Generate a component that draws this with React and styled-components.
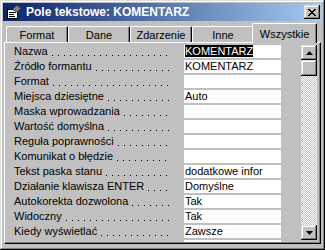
import React from "react";
import styled, { createGlobalStyle } from "styled-components";

const GlobalStyle = createGlobalStyle`
  body {
    margin: 0;
    background: #c0c0c0;
  }
  * {
    box-sizing: border-box;
  }
`;

const raised = `
  box-shadow: inset -1px -1px #000, inset 1px 1px #dfdfdf,
    inset -2px -2px #808080, inset 2px 2px #fff;
`;

const Window = styled.div`
  width: 325px;
  height: 250px;
  padding: 3px;
  background: #c0c0c0;
  ${raised}
  display: flex;
  flex-direction: column;
  font-family: "Liberation Sans", Arial, sans-serif;
  font-size: 11px;
  color: #000;
  overflow: hidden;
`;

const TitleBar = styled.div`
  height: 18px;
  flex-shrink: 0;
  display: flex;
  align-items: center;
  padding: 0 2px 0 3px;
  background: linear-gradient(to right, #0a246a, #a6caf0);
`;

const TitleText = styled.span`
  flex: 1;
  margin-left: 4px;
  color: #fff;
  font-weight: bold;
  font-size: 12px;
  white-space: nowrap;
`;

const CloseButton = styled.div`
  width: 16px;
  height: 14px;
  background: #c0c0c0;
  ${raised}
  display: flex;
  align-items: center;
  justify-content: center;
`;

const TabStrip = styled.div`
  height: 21px;
  flex-shrink: 0;
  display: flex;
  align-items: flex-end;
  padding-left: 3px;
  position: relative;
  z-index: 1;
`;

const Tab = styled.div`
  width: ${(p) => (p.$active ? 65 : 62)}px;
  height: ${(p) => (p.$active ? 20 : 16)}px;
  margin-left: ${(p) => (p.$active ? -2 : 0)}px;
  margin-bottom: ${(p) => (p.$active ? -1 : 0)}px;
  background: #c0c0c0;
  border-top: 1px solid #fff;
  border-left: 1px solid #fff;
  border-right: 1px solid #000;
  border-top-left-radius: 2px;
  border-top-right-radius: 2px;
  box-shadow: inset -1px 0 #808080;
  display: flex;
  align-items: center;
  justify-content: center;
  padding-top: 1px;
  white-space: nowrap;
`;

const Panel = styled.div`
  flex: 1;
  min-height: 0;
  margin: 0 1px 3px 1px;
  border-top: 1px solid #fff;
  border-left: 1px solid #fff;
  border-right: 1px solid #000;
  border-bottom: 1px solid #000;
  box-shadow: inset -1px -1px #808080;
  padding-top: 2px;
  display: flex;
  align-items: flex-start;
  overflow: hidden;
`;

const PropertyList = styled.div`
  width: 276px;
  height: 197px;
  display: flex;
  flex-direction: column;
  overflow: hidden;
`;

const Row = styled.div`
  height: 15px;
  flex-shrink: 0;
  display: flex;
  padding-bottom: 2px;
`;

const Label = styled.div`
  width: 179px;
  padding: 0 14px 0 9px;
  line-height: 13px;
  white-space: nowrap;
  display: flex;
`;

/* dotted leader between the property name and its value */
const Leader = styled.span`
  flex: 1;
  margin-left: 3px;
  background-image: linear-gradient(to right, #000 1px, transparent 1px);
  background-size: 6px 1px;
  background-repeat: repeat-x;
  background-position: 1px 10px;
`;

const Value = styled.div`
  width: 97px;
  background: #fff;
  line-height: 13px;
  padding-left: 1px;
  white-space: nowrap;
  overflow: hidden;
`;

const Selected = styled.span`
  background: #000;
  color: #fff;
`;

const Scrollbar = styled.div`
  width: 16px;
  height: 195px;
  margin-left: 20px;
  display: flex;
  flex-direction: column;
`;

const ScrollButton = styled.div`
  height: ${(p) => p.$size || 15}px;
  flex-shrink: 0;
  background: #c0c0c0;
  ${raised}
  display: flex;
  align-items: center;
  justify-content: center;
`;

const Track = styled.div`
  flex: 1;
  background-color: #c0c0c0;
  background-image: conic-gradient(#fff 25%, #c0c0c0 0 50%, #fff 0 75%, #c0c0c0 0);
  background-size: 2px 2px;
`;

const FormIcon = () => (
  <svg width="16" height="16" viewBox="0 0 16 16">
    <rect x="1.5" y="5.5" width="10" height="9" fill="#fff" stroke="#000" />
    <path d="M3 8.5h7M3 10.5h5M3 12.5h6" stroke="#000" />
    <path d="M6.5 5.5 L10.5 1.5 L15 4 L11.5 8 Z" fill="#808080" stroke="#404040" />
  </svg>
);

const CloseGlyph = () => (
  <svg width="8" height="7" viewBox="0 0 8 7" shapeRendering="crispEdges">
    <path d="M0 0h2l2 2.4L6 0h2L5 3.5 8 7H6L4 4.6 2 7H0l3-3.5z" fill="#000" />
  </svg>
);

const Arrow = ({ down }) => (
  <svg width="7" height="4" viewBox="0 0 7 4">
    <polygon points={down ? "0,0 7,0 3.5,4" : "3.5,0 7,4 0,4"} fill="#000" />
  </svg>
);

const tabs = ["Format", "Dane", "Zdarzenie", "Inne", "Wszystkie"];

const properties = [
  ["Nazwa", "KOMENTARZ", true],
  ["Źródło formantu", "KOMENTARZ"],
  ["Format", ""],
  ["Miejsca dziesiętne", "Auto"],
  ["Maska wprowadzania", ""],
  ["Wartość domyślna", ""],
  ["Reguła poprawności", ""],
  ["Komunikat o błędzie", ""],
  ["Tekst paska stanu", "dodatkowe infor"],
  ["Działanie klawisza ENTER", "Domyślne"],
  ["Autokorekta dozwolona", "Tak"],
  ["Widoczny", "Tak"],
  ["Kiedy wyświetlać", "Zawsze"],
  ["", ""],
];

export default function App() {
  return (
    <>
      <GlobalStyle />
      <Window>
        <TitleBar>
          <FormIcon />
          <TitleText>Pole tekstowe: KOMENTARZ</TitleText>
          <CloseButton>
            <CloseGlyph />
          </CloseButton>
        </TitleBar>
        <TabStrip>
          {tabs.map((t) => (
            <Tab key={t} $active={t === "Wszystkie"}>
              {t}
            </Tab>
          ))}
        </TabStrip>
        <Panel>
          <PropertyList>
            {properties.map(([label, value, selected], i) => (
              <Row key={i}>
                <Label>
                  {label}
                  {label && <Leader />}
                </Label>
                <Value>{selected ? <Selected>{value}</Selected> : value}</Value>
              </Row>
            ))}
          </PropertyList>
          <Scrollbar>
            <ScrollButton>
              <Arrow />
            </ScrollButton>
            <ScrollButton $size={16} />
            <Track />
            <ScrollButton>
              <Arrow down />
            </ScrollButton>
          </Scrollbar>
        </Panel>
      </Window>
    </>
  );
}
